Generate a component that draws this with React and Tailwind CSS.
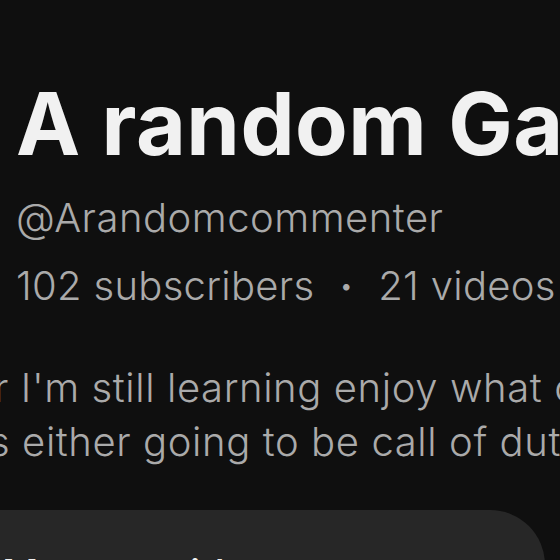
export default function App() {
  return (
    <div className="h-[560px] w-[560px] overflow-hidden bg-[#0f0f0f] font-['Inter',sans-serif]">
      <div className="pt-[74px] pl-[16px]">
        <h1 className="whitespace-nowrap text-[86px] leading-[100px] font-bold tracking-[0.5px] text-[#f1f1f1]">
          A random Gamer
        </h1>
        <div className="mt-[18px] whitespace-nowrap text-[40px] leading-[52px] font-light tracking-[0.5px] text-[#aaaaaa]">
          @Arandomcommenter
        </div>
        <div className="mt-[16px] flex items-center whitespace-nowrap text-[40px] leading-[52px] font-light tracking-[0.3px] text-[#aaaaaa]">
          <span>102 subscribers</span>
          <span className="mx-[25px] text-[24px]">•</span>
          <span>21 videos</span>
        </div>
      </div>
      <div className="mt-[49px] -ml-[6px] whitespace-nowrap text-[40px] leading-[54px] font-light tracking-[0.6px] text-[#aaaaaa]">
        <div>r I'm still learning enjoy what content I make</div>
        <div className="-ml-[5px]">s either going to be call of duty or minecraft</div>
      </div>
      <div className="mt-[41px] -ml-[60px] h-[110px] w-[605px] rounded-full bg-[#272727] pt-[40px] pl-[62px] text-[40px] leading-[48px]">
        <span className="whitespace-nowrap font-medium text-[#f1f1f1]">Manage videos</span>
      </div>
    </div>
  )
}
